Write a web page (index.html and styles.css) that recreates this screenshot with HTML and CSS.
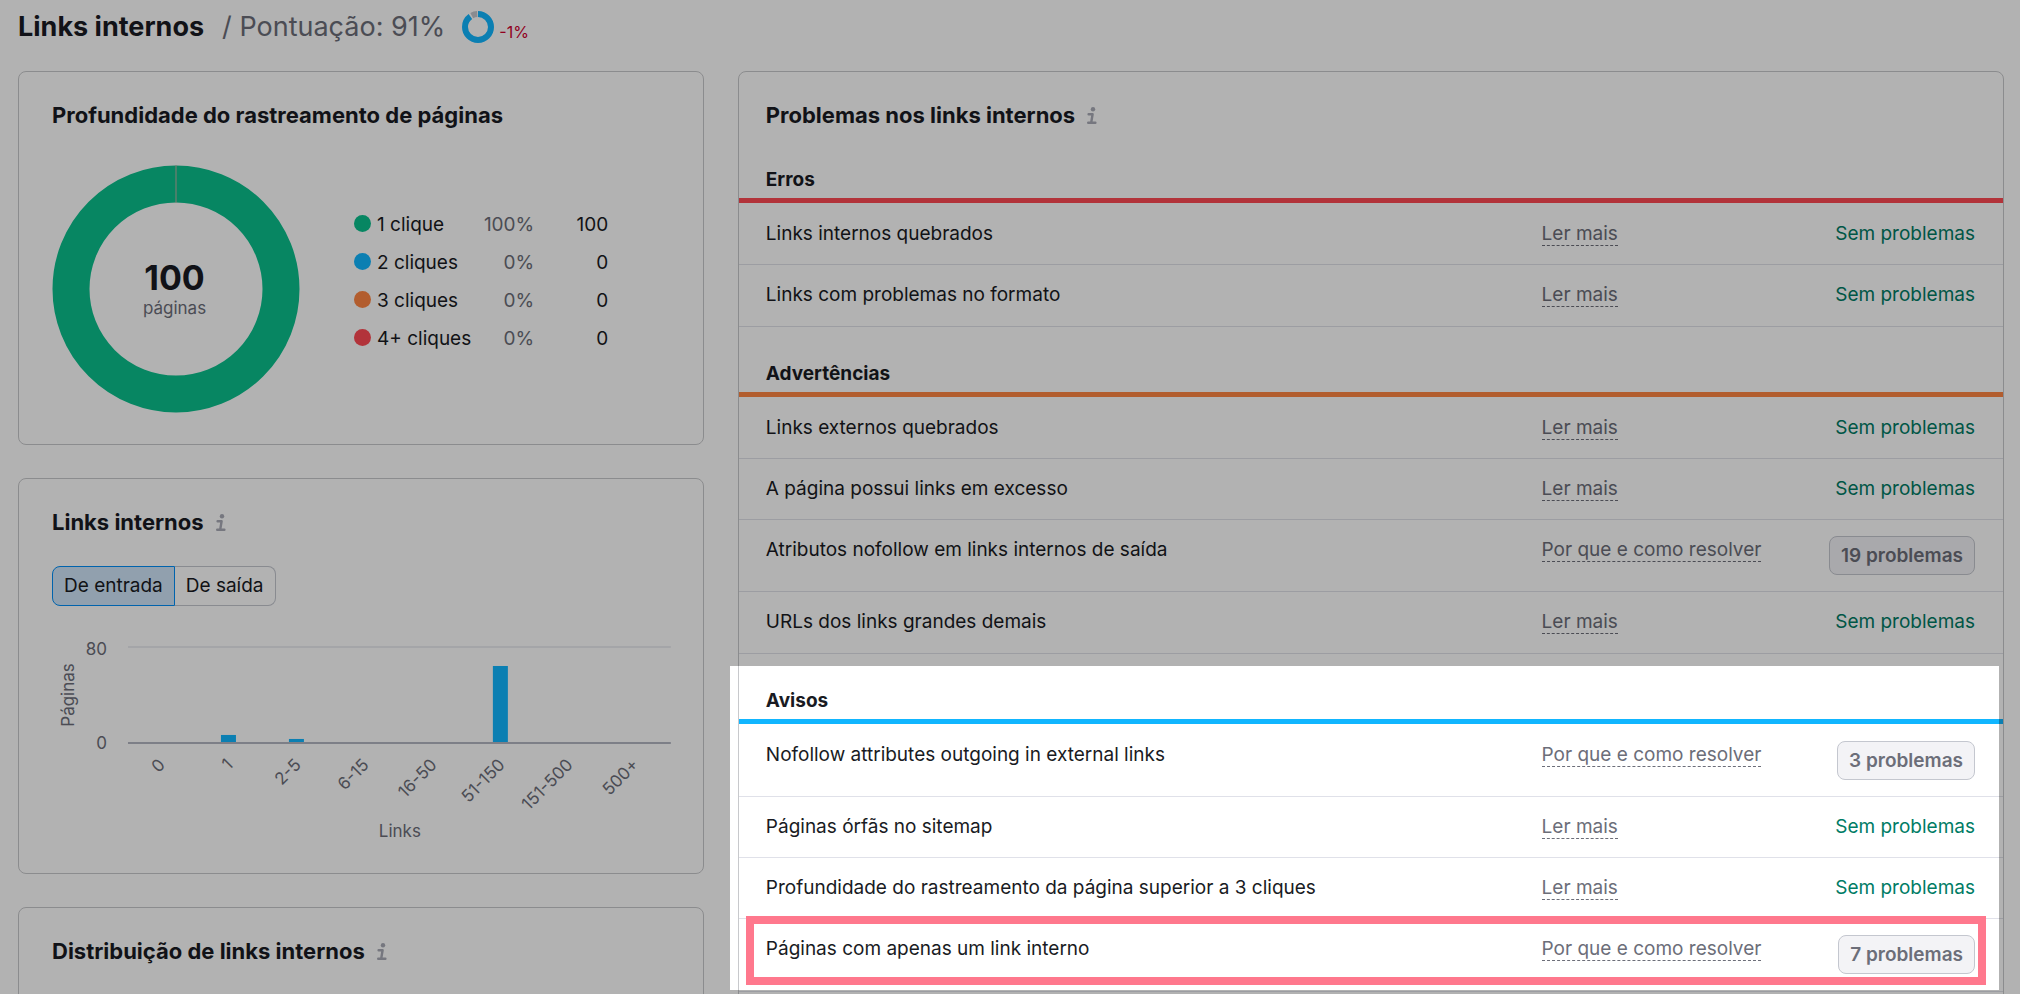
FILE: index.html
```html
<!DOCTYPE html>
<html lang="pt-BR">
<head>
<meta charset="utf-8">
<title>Links internos</title>
<link rel="stylesheet" href="styles.css">
</head>
<body>
<svg class="symbols" aria-hidden="true">
  <symbol id="info" viewBox="0 0 10 18">
    <circle cx="6" cy="2.2" r="2.2"/>
    <path d="M1.6 7.2H5.6L4.2 15.6M1.2 15.8H8.4" fill="none" stroke="currentColor" stroke-width="2.4" stroke-linecap="round" stroke-linejoin="round"/>
  </symbol>
</svg>

<header class="page-header">
  <h1 class="page-title">Links internos</h1>
  <p class="score">/ Pontuação: 91%</p>
  <svg class="score-ring" viewBox="0 0 32 32" aria-hidden="true">
    <circle class="ring-rest" cx="16" cy="16" r="13" pathLength="100" stroke-dasharray="7 93" stroke-dashoffset="8"/>
    <circle class="ring-value" cx="16" cy="16" r="13" pathLength="100" stroke-dasharray="90 10"/>
  </svg>
  <span class="score-delta">-1%</span>
</header>

<main class="dashboard">
  <div class="column">
    <section class="card">
      <h2 class="card-title">Profundidade do rastreamento de páginas</h2>
      <div class="depth">
        <div class="donut">
          <svg class="donut-chart" viewBox="0 0 248 248" aria-hidden="true">
            <circle class="donut-ring" cx="124" cy="124" r="105"/>
            <path class="donut-seam" d="M124 0V38"/>
          </svg>
          <div class="donut-label"><strong class="donut-total">100</strong><span class="donut-unit">páginas</span></div>
        </div>
        <table class="legend">
          <tr><th scope="row"><span class="dot green"></span>1 clique</th><td class="share">100%</td><td class="count">100</td></tr>
          <tr><th scope="row"><span class="dot blue"></span>2 cliques</th><td class="share">0%</td><td class="count">0</td></tr>
          <tr><th scope="row"><span class="dot orange"></span>3 cliques</th><td class="share">0%</td><td class="count">0</td></tr>
          <tr><th scope="row"><span class="dot red"></span>4+ cliques</th><td class="share">0%</td><td class="count">0</td></tr>
        </table>
      </div>
    </section>

    <section class="card">
      <h2 class="card-title">Links internos <svg class="info"><use href="#info"/></svg></h2>
      <div class="toggle">
        <button class="toggle-option selected" type="button" aria-pressed="true">De entrada</button>
        <button class="toggle-option" type="button" aria-pressed="false">De saída</button>
      </div>
      <svg class="chart" viewBox="0 0 618 208" role="img" aria-label="Páginas por número de links">
        <path class="grid-line" d="M76 13H619"/>
        <rect class="bar" x="169" y="101" width="15" height="8"/>
        <rect class="bar" x="237" y="105" width="15" height="4"/>
        <rect class="bar" x="441" y="32" width="15" height="77"/>
        <path class="axis-line" d="M76 109H619"/>
        <g text-anchor="end">
          <text x="55" y="21">80</text>
          <text x="55" y="115">0</text>
          <text transform="translate(114 132) rotate(-45)">0</text>
          <text transform="translate(182 132) rotate(-45)">1</text>
          <text transform="translate(250 132) rotate(-45)">2-5</text>
          <text transform="translate(318 132) rotate(-45)">6-15</text>
          <text transform="translate(386 132) rotate(-45)">16-50</text>
          <text transform="translate(454 132) rotate(-45)">51-150</text>
          <text transform="translate(522 132) rotate(-45)">151-500</text>
          <text transform="translate(588 132) rotate(-45)">500+</text>
        </g>
        <g text-anchor="middle">
          <text transform="translate(22 61) rotate(-90)">Páginas</text>
          <text x="348" y="203">Links</text>
        </g>
      </svg>
    </section>

    <section class="card">
      <h2 class="card-title">Distribuição de links internos <svg class="info"><use href="#info"/></svg></h2>
      <div class="distribution"></div>
    </section>
  </div>

  <section class="card issues">
    <h2 class="card-title">Problemas nos links internos <svg class="info"><use href="#info"/></svg></h2>

    <section class="group first">
      <h3 class="group-title errors">Erros</h3>
      <table class="issue-table">
        <tr><td>Links internos quebrados</td><td><a class="hint" href="#">Ler mais</a></td><td><a class="ok" href="#">Sem problemas</a></td></tr>
        <tr><td>Links com problemas no formato</td><td><a class="hint" href="#">Ler mais</a></td><td><a class="ok" href="#">Sem problemas</a></td></tr>
      </table>
    </section>

    <section class="group">
      <h3 class="group-title warnings">Advertências</h3>
      <table class="issue-table">
        <tr><td>Links externos quebrados</td><td><a class="hint" href="#">Ler mais</a></td><td><a class="ok" href="#">Sem problemas</a></td></tr>
        <tr><td>A página possui links em excesso</td><td><a class="hint" href="#">Ler mais</a></td><td><a class="ok" href="#">Sem problemas</a></td></tr>
        <tr><td>Atributos nofollow em links internos de saída</td><td><a class="hint" href="#">Por que e como resolver</a></td><td><button class="count-button" type="button">19 problemas</button></td></tr>
        <tr><td>URLs dos links grandes demais</td><td><a class="hint" href="#">Ler mais</a></td><td><a class="ok" href="#">Sem problemas</a></td></tr>
      </table>
    </section>

    <section class="group">
      <h3 class="group-title notices">Avisos</h3>
      <table class="issue-table">
        <tr><td>Nofollow attributes outgoing in external links</td><td><a class="hint" href="#">Por que e como resolver</a></td><td><button class="count-button" type="button">3 problemas</button></td></tr>
        <tr><td>Páginas órfãs no sitemap</td><td><a class="hint" href="#">Ler mais</a></td><td><a class="ok" href="#">Sem problemas</a></td></tr>
        <tr><td>Profundidade do rastreamento da página superior a 3 cliques</td><td><a class="hint" href="#">Ler mais</a></td><td><a class="ok" href="#">Sem problemas</a></td></tr>
        <tr><td>Páginas com apenas um link interno</td><td><a class="hint" href="#">Por que e como resolver</a></td><td><button class="count-button" type="button">7 problemas</button></td></tr>
      </table>
      <div class="spotlight"></div>
      <div class="marker"></div>
    </section>
  </section>
</main>
</body>
</html>
```
FILE: styles.css
```css
* { box-sizing: border-box; }

body {
  margin: 0;
  height: 100vh;
  overflow: hidden;
  background: #fff;
  color: #191b23;
  font: 19px/28px Inter, "Liberation Sans", sans-serif;
}

h1, h2, h3, p { margin: 0; }
button { font: inherit; color: inherit; cursor: pointer; }
.symbols { display: none; }

.page-header {
  display: flex;
  align-items: center;
  height: 71px;
  padding: 0 18px 18px;
}
.page-title { font-size: 27px; font-weight: 700; }
.score { margin-left: 18px; font-size: 27px; color: #6c6e79; }
.score-ring { width: 32px; height: 32px; margin-left: 17px; transform: rotate(-90deg); }
.score-ring circle { fill: none; stroke-width: 6; }
.ring-value { stroke: #11b6ff; }
.ring-rest { stroke: #c4c7cf; }
.score-delta { margin: 10px 0 0 5px; font-size: 16px; color: #d1002f; }

.dashboard {
  display: grid;
  grid-template-columns: 13fr 24fr;
  gap: 34px;
  padding: 0 16px 0 18px;
}
.column { display: flex; flex-direction: column; gap: 33px; }
.card {
  padding: 29px 33px 31px;
  border: 1px solid #c8c9cc;
  border-radius: 8px;
}
.card-title { font-size: 22px; font-weight: 700; line-height: 28px; }
.info { width: 10px; height: 18px; margin-left: 7px; fill: currentColor; color: #a9abb6; vertical-align: -2px; }

.depth { display: flex; gap: 54px; margin-top: 36px; }
.donut { display: grid; width: 248px; flex: none; }
.donut-chart, .donut-label { grid-area: 1 / 1; }
.donut-ring { fill: none; stroke: #0bc08d; stroke-width: 37; }
.donut-seam { stroke: #c4b0a4; stroke-width: 1; }
.donut-label { display: flex; flex-direction: column; justify-content: center; align-items: center; padding: 2px 3px 0 0; }
.donut-total { font-size: 34px; line-height: 36px; }
.donut-unit { font-size: 17px; line-height: 24px; color: #6c6e79; }

.legend { align-self: flex-start; margin-top: 41px; border-collapse: collapse; }
.legend th, .legend td { padding: 5px 0; text-align: right; font-weight: 400; }
.legend th { text-align: left; }
.legend .share { width: 63px; color: #6c6e79; }
.legend .count { width: 74px; }
.dot { display: inline-block; width: 17px; height: 17px; margin-right: 6px; border-radius: 50%; vertical-align: -1px; }
.green { background: #0bc08d; }
.blue { background: #11b6ff; }
.orange { background: #ff8642; }
.red { background: #ff4953; }

.toggle { display: flex; margin-top: 30px; }
.toggle-option {
  height: 40px;
  padding: 0 11px;
  border: 1px solid #c4c7cf;
  border-left: 0;
  border-radius: 0 8px 8px 0;
  background: transparent;
}
.toggle-option.selected {
  border: 1px solid #008ff8;
  border-radius: 8px 0 0 8px;
  background: #d0e6f9;
}

.chart { display: block; width: 100%; margin-top: 28px; overflow: visible; font-size: 17px; fill: #6c6e79; }
.grid-line { stroke: #d8dae3; stroke-width: 1; }
.axis-line { stroke: #b4b6c2; stroke-width: 2; }
.bar { fill: #11b6ff; }
.distribution { height: 300px; }

.issues { padding: 29px 0 31px; }
.issues > .card-title { padding: 0 27px; }
.group { position: relative; padding-top: 33px; }
.group.first { padding-top: 37px; }
.group-title {
  padding: 0 27px 4px;
  border-bottom: 5px solid;
  font-size: 19px;
  font-weight: 700;
  line-height: 28px;
}
.errors { border-color: #ff4953; }
.warnings { border-color: #ff8642; }
.notices { border-color: #11b6ff; }

.issue-table { width: 100%; border-collapse: collapse; table-layout: fixed; }
.issue-table td { padding: 16px 0; border-bottom: 1px solid #e0e1e9; vertical-align: top; }
.issue-table tr:first-child td { padding-top: 17px; }
.issue-table td:nth-child(1) { width: 63.5%; padding-left: 27px; }
.issue-table td:nth-child(2) { width: 18%; }
.issue-table td:nth-child(3) { padding-right: 28px; text-align: right; }
.issue-table tr:last-child td { padding-bottom: 17px; }

.hint { color: #6c6e79; text-decoration: none; border-bottom: 1px dashed #6c6e79; }
.ok { color: #007c65; text-decoration: none; }
.count-button {
  display: block;
  height: 39px;
  margin-left: auto;
  padding: 0 11px;
  border: 1px solid #c4c7cf;
  border-radius: 8px;
  background: #f3f3f6;
  color: #6c6e79;
  font-weight: 600;
}

.spotlight {
  position: absolute;
  inset: 12px 4px 2px -9px;
  box-shadow: 0 0 0 3000px rgba(0, 0, 0, .3);
  pointer-events: none;
}
.marker {
  position: absolute;
  inset: auto 17px 7px 7px;
  height: 69px;
  border: 8px solid #ff788d;
  pointer-events: none;
}
```
